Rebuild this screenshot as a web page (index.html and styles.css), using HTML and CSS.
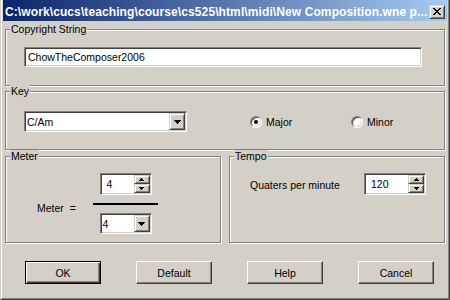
FILE: index.html
```html
<!DOCTYPE html>
<html>
<head>
<meta charset="utf-8">
<link rel="stylesheet" href="styles.css">
</head>
<body>
<div class="window">
  <div class="frame">
    <div class="titlebar">
      <span class="title">C:\work\cucs\teaching\course\cs525\html\midi\New Composition.wne p...</span>
      <span class="close raised"><svg width="8" height="7" viewBox="0 0 8 7"><path d="M0 0h2v1h1v1h2V1h1V0h2v1H7v1H6v1H5v1h1v1h1v1h1v1H6V6H5V5H3v1H2v1H0V6h1V5h1V4h1V3H2V2H1V1H0z"/></svg></span>
    </div>
    <div class="content">
      <div class="group copyright">
        <span class="caption">Copyright String</span>
        <div class="textbox sunken">ChowTheComposer2006</div>
      </div>
      <div class="group key">
        <span class="caption">Key</span>
        <div class="combo combo-key sunken">
          <span class="combo-text">C/Am</span>
          <span class="ddbtn raised"><svg width="7" height="4" viewBox="0 0 7 4"><path d="M0 0h7v1H6v1H5v1H4v1H3V3H2V2H1V1H0z"/></svg></span>
        </div>
        <div class="opt opt-major"><span class="radio checked"></span><span>Major</span></div>
        <div class="opt"><span class="radio"></span><span>Minor</span></div>
      </div>
      <div class="row">
        <div class="group meter">
          <span class="caption">Meter</span>
          <span class="meter-label">Meter&nbsp; =</span>
          <div class="fraction">
            <div class="spin spin-meter sunken">
              <span class="spin-text">4</span>
              <span class="spin-btns">
                <span class="sbtn raised"><svg width="5" height="3" viewBox="0 0 5 3"><path d="M2 0h1v1h1v1h1v1H0V2h1V1h1z"/></svg></span>
                <span class="sbtn raised"><svg width="5" height="3" viewBox="0 0 5 3"><path d="M0 0h5v1H4v1H3v1H2V2H1V1H0z"/></svg></span>
              </span>
            </div>
            <div class="bar"></div>
            <div class="combo combo-meter sunken">
              <span class="combo-text">4</span>
              <span class="ddbtn raised"><svg width="7" height="4" viewBox="0 0 7 4"><path d="M0 0h7v1H6v1H5v1H4v1H3V3H2V2H1V1H0z"/></svg></span>
            </div>
          </div>
        </div>
        <div class="group tempo">
          <span class="caption">Tempo</span>
          <span class="tempo-label">Quaters per minute</span>
          <div class="spin spin-tempo sunken">
            <span class="spin-text">120</span>
            <span class="spin-btns">
              <span class="sbtn raised"><svg width="5" height="3" viewBox="0 0 5 3"><path d="M2 0h1v1h1v1h1v1H0V2h1V1h1z"/></svg></span>
              <span class="sbtn raised"><svg width="5" height="3" viewBox="0 0 5 3"><path d="M0 0h5v1H4v1H3v1H2V2H1V1H0z"/></svg></span>
            </span>
          </div>
        </div>
      </div>
      <div class="buttons">
        <button class="btn btn-default">OK</button>
        <button class="btn">Default</button>
        <button class="btn">Help</button>
        <button class="btn">Cancel</button>
      </div>
    </div>
  </div>
</div>
</body>
</html>
```
FILE: styles.css
```css
html, body {
  margin: 0;
  padding: 0;
}
body {
  width: 450px;
  height: 300px;
  overflow: hidden;
  background: #d4d0c8;
  font-family: "Liberation Sans", Arial, sans-serif;
  font-size: 10.5px;
  line-height: 12px;
  color: #000;
}
.window {
  box-sizing: border-box;
  width: 450px;
  height: 300px;
  border-left: 1px solid #d4d0c8;
  border-right: 1px solid #404040;
  border-bottom: 1px solid #404040;
}
.frame {
  box-sizing: border-box;
  height: 100%;
  border-left: 1px solid #fff;
  border-right: 1px solid #808080;
  border-bottom: 1px solid #808080;
  padding: 0 1px 1px 1px;
  display: flex;
  flex-direction: column;
}
.titlebar {
  box-sizing: border-box;
  flex: none;
  height: 21px;
  padding: 2px 2px 0 2px;
  display: flex;
  align-items: center;
  justify-content: space-between;
  background: linear-gradient(to right, #0a246a, #a6caf0);
  color: #fff;
  font-weight: bold;
  font-size: 12px;
  letter-spacing: 0.1px;
  white-space: nowrap;
}
.raised {
  box-sizing: border-box;
  background: #d4d0c8;
  border: 1px solid;
  border-color: #d4d0c8 #404040 #404040 #d4d0c8;
  box-shadow: inset 1px 1px 0 #fff, inset -1px -1px 0 #808080;
  display: flex;
  align-items: center;
  justify-content: center;
}
.sunken {
  box-sizing: border-box;
  background: #fff;
  border: 1px solid;
  border-color: #808080 #fff #fff #808080;
  box-shadow: inset 1px 1px 0 #404040, inset -1px -1px 0 #d4d0c8;
}
.close {
  width: 16px;
  height: 14px;
}
.close svg, .ddbtn svg, .sbtn svg {
  display: block;
  fill: #000;
}
.content {
  flex: 1;
  padding: 8px 2px 0 2px;
  display: flex;
  flex-direction: column;
}
.group {
  position: relative;
  box-sizing: border-box;
  border: 1px solid #808080;
  box-shadow: 1px 1px 0 #fff, inset 1px 1px 0 #fff;
}
.caption {
  position: absolute;
  top: -7px;
  left: 4px;
  padding: 0 1px;
  background: #d4d0c8;
  line-height: 12px;
  white-space: nowrap;
}
.copyright {
  height: 57px;
  padding: 17px 0 0 18px;
}
.textbox {
  width: 398px;
  height: 20px;
  padding: 0 3px;
  display: flex;
  align-items: center;
}
.key {
  margin-top: 5px;
  height: 59px;
  padding: 19px 0 0 18px;
  display: flex;
  align-items: flex-start;
}
.combo {
  height: 21px;
  padding: 1px;
  display: flex;
  align-items: center;
}
.combo-key {
  width: 163px;
}
.combo-meter {
  width: 52px;
}
.combo-text {
  flex: 1;
  padding-left: 1px;
}
.ddbtn {
  width: 16px;
  height: 17px;
}
.opt {
  height: 21px;
  display: flex;
  align-items: center;
  gap: 4px;
}
.opt-major {
  margin-left: 63px;
  width: 101px;
}
.radio {
  position: relative;
  box-sizing: border-box;
  width: 12px;
  height: 12px;
  border-radius: 50%;
  background: #fff;
  border: 1px solid;
  border-color: #808080 #fff #fff #808080;
  box-shadow: inset 1px 1px 0 #404040, inset -1px -1px 0 #d4d0c8;
}
.radio.checked::after {
  content: "";
  position: absolute;
  left: 3px;
  top: 3px;
  width: 4px;
  height: 4px;
  border-radius: 50%;
  background: #000;
}
.row {
  margin-top: 6px;
  display: flex;
  gap: 8px;
}
.meter, .tempo {
  flex: none;
  width: 216px;
  height: 87px;
  display: flex;
  align-items: flex-start;
}
.meter {
  padding: 16px 0 0 31px;
}
.meter-label {
  width: 56px;
  align-self: center;
  margin-top: 1px;
  white-space: nowrap;
}
.fraction {
  width: 65px;
  display: flex;
  flex-direction: column;
  align-items: center;
}
.spin {
  height: 22px;
  padding: 1px;
  display: flex;
}
.spin-meter {
  width: 52px;
}
.spin-tempo {
  width: 62px;
}
.spin-text {
  flex: 1;
  padding-left: 5px;
  display: flex;
  align-items: center;
}
.spin-btns {
  width: 16px;
  display: flex;
  flex-direction: column;
}
.sbtn {
  flex: 1;
}
.bar {
  width: 65px;
  height: 2px;
  background: #000;
  margin: 8px 0;
}
.tempo {
  padding: 16px 0 0 20px;
}
.tempo-label {
  width: 114px;
  height: 22px;
  display: flex;
  align-items: center;
  padding-top: 2px;
  box-sizing: border-box;
  white-space: nowrap;
}
.buttons {
  margin-top: 18px;
  padding-left: 20px;
  display: flex;
  gap: 35px;
}
.btn {
  appearance: none;
  margin: 0;
  padding: 0;
  width: 76px;
  height: 23px;
  box-sizing: border-box;
  font-family: "Liberation Sans", Arial, sans-serif;
  font-size: 10.5px;
  line-height: 12px;
  color: #000;
  background: #d4d0c8;
  border: 1px solid;
  border-color: #fff #404040 #404040 #fff;
  box-shadow: inset -1px -1px 0 #808080;
}
.btn-default {
  border: 1px solid #000;
  box-shadow: inset 1px 1px 0 #fff, inset -1px -1px 0 #404040, inset -2px -2px 0 #808080;
}
```
